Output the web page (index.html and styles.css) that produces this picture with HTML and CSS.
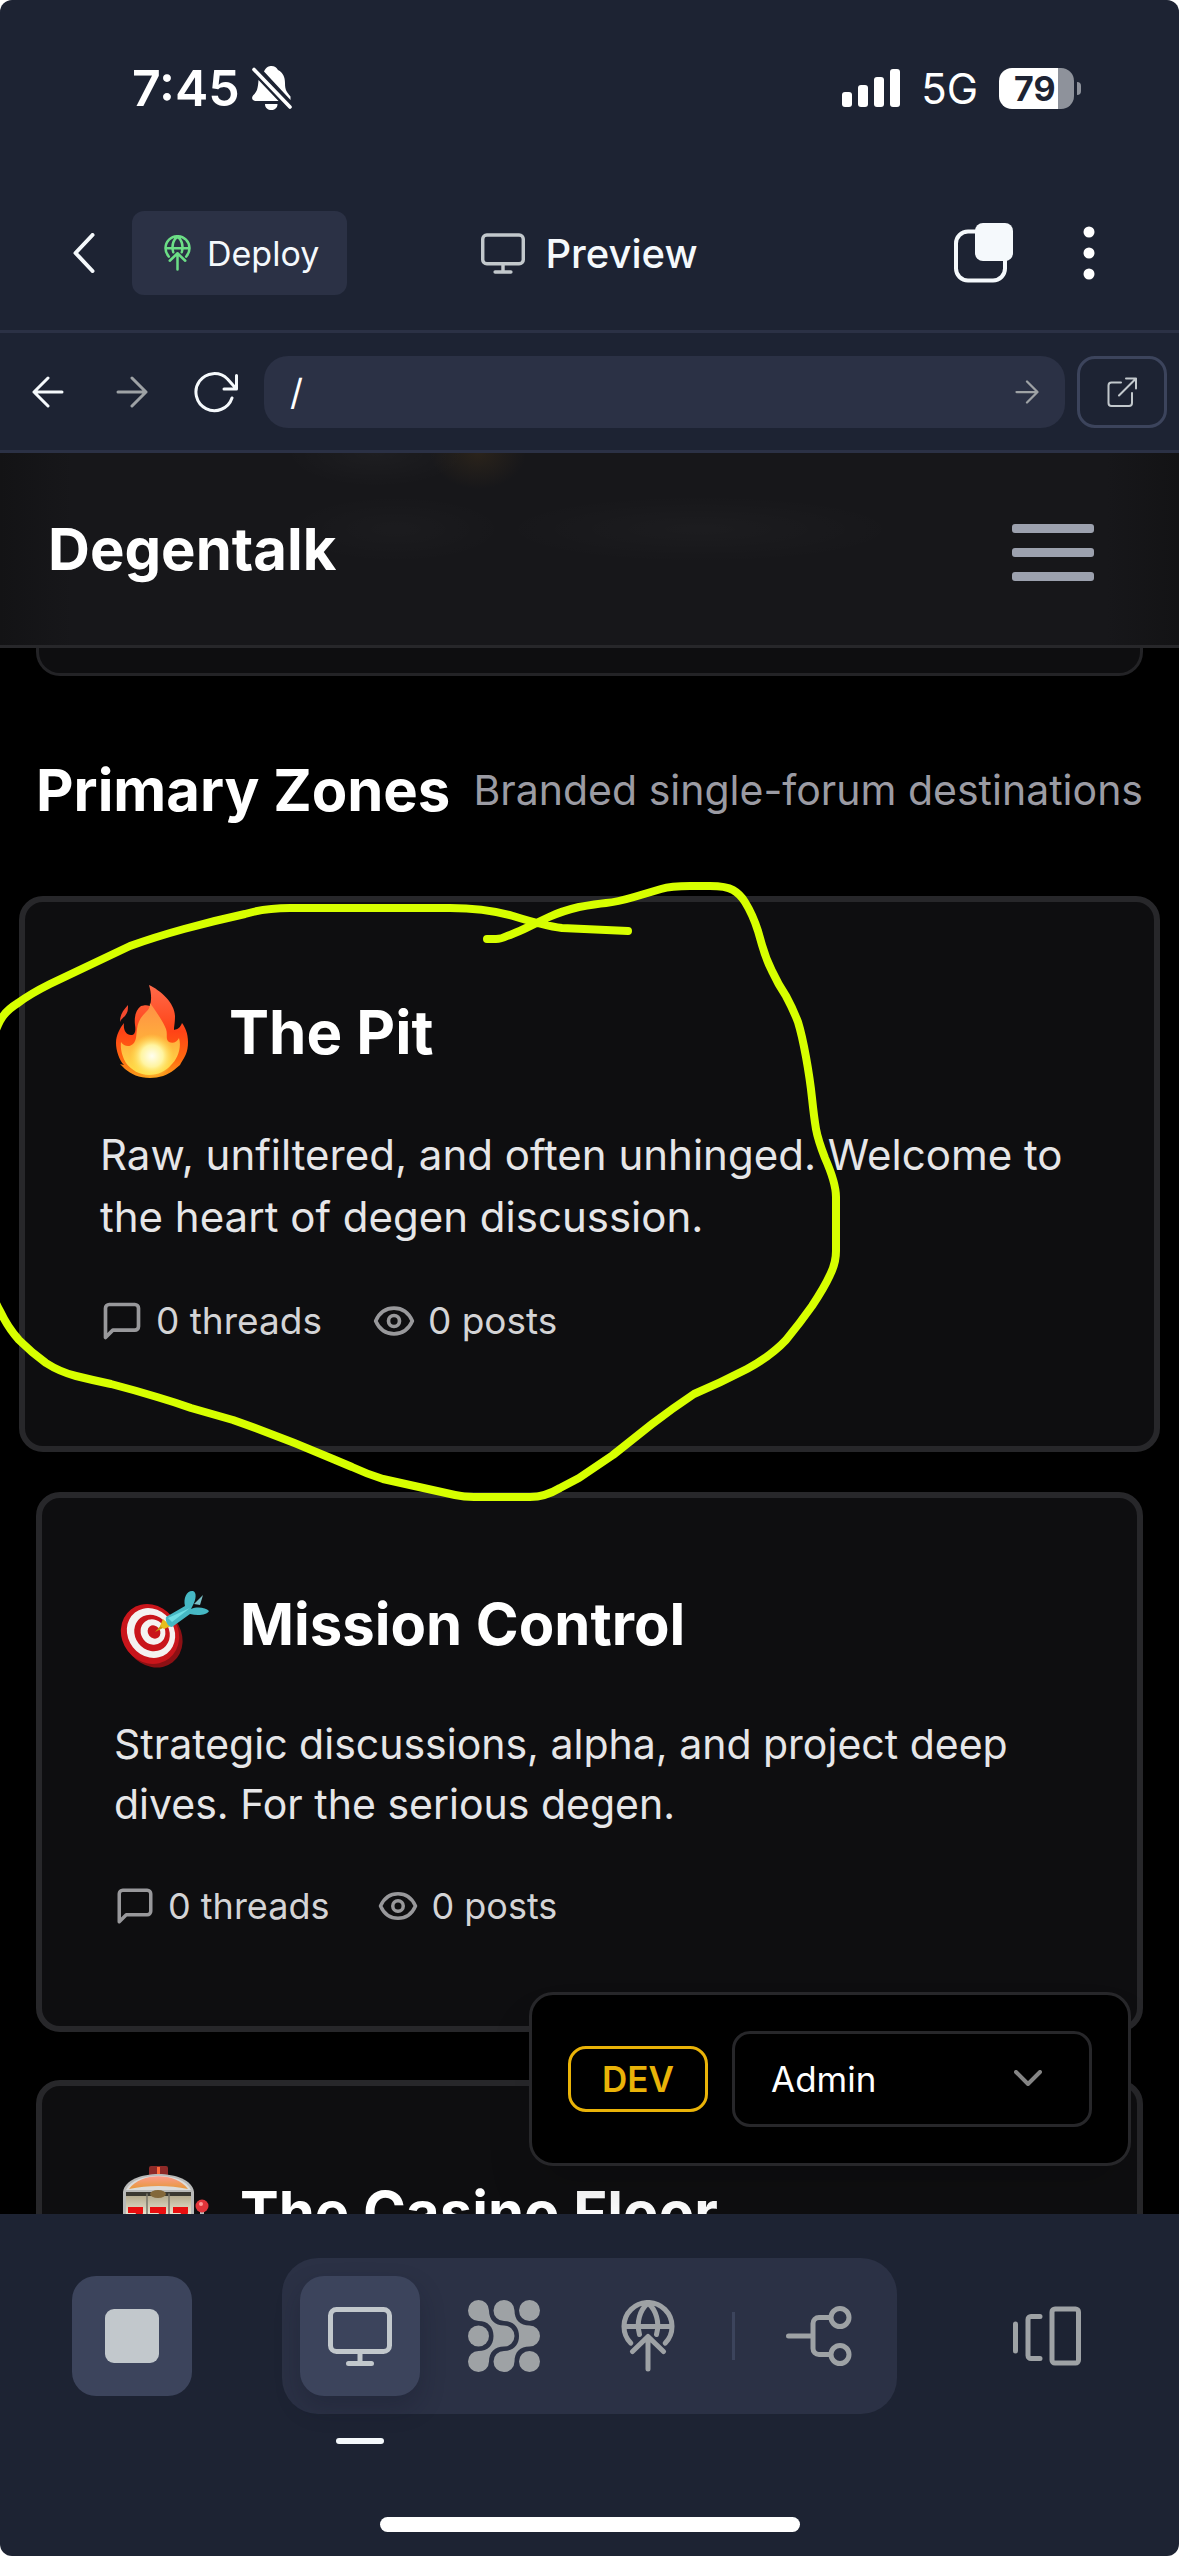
FILE: index.html
```html
<!DOCTYPE html>
<html lang="en">
<head>
<meta charset="utf-8">
<meta name="viewport" content="width=device-width, initial-scale=1">
<title>Preview</title>
<link rel="stylesheet" href="styles.css">
</head>
<body>
<svg class="defs" aria-hidden="true">
  <symbol id="i-monitor" viewBox="0 0 64 59"><rect x="2.5" y="2.5" width="59" height="42" rx="6"/><path d="M32 45v11M20.500 56.500h23"/></symbol>
  <symbol id="i-globe" viewBox="0 0 54 72"><path d="M9.700 43.100A24 24 0 1 1 44.300 43.100M3 26.500h48M18.500 34.500C15 22 19 10 27 3M35.500 34.500C39 22 35 10 27 3M27 37v32M11.500 51.500 27 36.500l15.500 15"/></symbol>
  <symbol id="i-left" viewBox="0 0 32 32"><path d="M30 16H2M16 2 2 16l14 14"/></symbol>
  <symbol id="i-right" viewBox="0 0 32 32"><path d="M2 16h28M16 2l14 14-14 14"/></symbol>
  <symbol id="i-message" viewBox="0 0 24 24"><path d="M21 15a2 2 0 0 1-2 2H7l-4 4V5a2 2 0 0 1 2-2h14a2 2 0 0 1 2 2z"/></symbol>
  <symbol id="i-eye" viewBox="0 0 24 24"><path d="M2 12C4 7.500 7.500 5 12 5s8 2.500 10 7c-2 4.500-5.500 7-10 7s-8-2.500-10-7z"/><circle cx="12" cy="12" r="3"/></symbol>
</svg>

<div class="app">
  <div class="status">
    <div class="status-group">
      <span class="time">7:45</span>
      <svg class="bell solid" viewBox="0 0 40 44" aria-label="Silent"><path d="M12 5.500C14 1 17 0 19.500 0c3 0 5 1.500 6.500 4 5 2.500 7 7 7 13 0 8 2 9 5.500 13.500V34zM6.500 14 26.500 35H4c-4.500 0-5-4-2-6.500C5 25.500 6 22 6.500 14zM13 38h12.500c0 4-3 6-6.200 6S13 42 13 38z"/><path d="M2 3.500 38 41" fill="none" stroke="#fff" stroke-width="3.600" stroke-linecap="round"/></svg>
    </div>
    <div class="status-group status-right">
      <svg class="bars solid" viewBox="0 0 58 38" aria-hidden="true"><rect y="23" width="10" height="15" rx="3"/><rect x="16" y="16" width="10" height="22" rx="3"/><rect x="32" y="8" width="10" height="30" rx="3"/><rect x="48" width="10" height="38" rx="3"/></svg>
      <span class="network">5G</span>
      <span class="battery"><span class="battery-level">79</span></span>
    </div>
  </div>

  <header class="topbar">
    <div class="topbar-side">
      <button class="icon-btn" aria-label="Back"><svg class="chev" viewBox="0 0 22 40"><path d="M20 2 3 20l17 18"/></svg></button>
      <button class="deploy"><svg class="deploy-icon"><use href="#i-globe"/></svg>Deploy</button>
    </div>
    <h1 class="topbar-title"><svg class="title-icon"><use href="#i-monitor"/></svg>Preview</h1>
    <div class="topbar-side topbar-end">
      <button class="icon-btn" aria-label="Tabs"><svg class="tabs-icon" viewBox="0 0 59 60"><rect x="2" y="8.500" width="49" height="49" rx="12" fill="none" stroke="#f5f9fc" stroke-width="4"/><rect x="21" y="0" width="38" height="38" rx="8" fill="#f5f9fc"/></svg></button>
      <button class="icon-btn" aria-label="More"><svg class="dots solid" viewBox="0 0 12 54"><circle cx="6" cy="6" r="5.500"/><circle cx="6" cy="27" r="5.500"/><circle cx="6" cy="48" r="5.500"/></svg></button>
    </div>
  </header>

  <nav class="toolbar" aria-label="Browser">
    <button class="tool" aria-label="Back"><svg class="arrow"><use href="#i-left"/></svg></button>
    <button class="tool dim" aria-label="Forward"><svg class="arrow"><use href="#i-right"/></svg></button>
    <button class="tool" aria-label="Reload"><svg class="reload" viewBox="0 0 44 42"><path d="M38 27A18.500 18.500 0 1 1 33.500 8L42 17.500M42.500 4.500v13.500H30"/></svg></button>
    <label class="url"><input type="text" value="/" aria-label="Path"><svg class="go"><use href="#i-right"/></svg></label>
    <button class="open" aria-label="Open in new tab"><svg class="open-icon" viewBox="0 0 30 30"><path d="M14 5.500H4.500a3 3 0 0 0-3 3V26a3 3 0 0 0 3 3H22a3 3 0 0 0 3-3V16M19 1.500h10v10M29 1.500 12 18.500"/></svg></button>
  </nav>

  <main class="preview">
    <div class="site-header">
      <a class="brand" href="#">Degentalk</a>
      <button class="burger" aria-label="Menu"><span></span><span></span><span></span></button>
    </div>

    <div class="content">
      <div class="tail-card"></div>

      <div class="section-head">
        <h2>Primary Zones</h2>
        <p>Branded single-forum destinations</p>
      </div>

      <div class="zones">
        <article class="zone zone-raised">
          <div class="zone-title">
            <svg class="emoji" viewBox="0 0 99 111" aria-label="Fire">
              <defs>
                <linearGradient id="f1" x1="0" y1="0" x2="0" y2="1"><stop offset="0" stop-color="#ff6a4a"/><stop offset=".5" stop-color="#ff4316"/><stop offset=".8" stop-color="#ff6a10"/><stop offset="1" stop-color="#f9a01c"/></linearGradient>
                <linearGradient id="f2" x1="0" y1="0" x2="0" y2="1"><stop offset="0" stop-color="#ff8f45"/><stop offset=".5" stop-color="#ffae3c"/><stop offset="1" stop-color="#ffe14a"/></linearGradient>
                <radialGradient id="f3"><stop offset="0" stop-color="#fffef0"/><stop offset=".5" stop-color="#fff4a0"/><stop offset="1" stop-color="#ffe14a" stop-opacity="0"/></radialGradient>
              </defs>
              <path fill="url(#f1)" d="M49 9C60 14 75 27 75 40c0 7-1 10-1 14 4-1 6-2 8-7 3 4 6 10 6 19 0 10-3 15-7 21l-1 2-6 5c-6 5-15 8-24 8-11 0-19-4-25-9l-5-5 4 1C19 84 16 74 16 67c0-8 4-15 8-20-1 7 2 12 7 12 4 0 5-4 4-10-1-9 1-15 6-19 4-1 6-1 9 0 2-8 1-14-1-21z"/>
              <path fill="#f4492e" d="M28 29c0 5 0 7-3 11-2 2-4 3-5 6 0-8 3-11 8-17z"/>
              <path fill="url(#f2)" d="M50 27c5 7 13 18 16 26 2 5-1 10 3 13 4 2 8 0 10-4 3 10-2 22-8 27-5 6-13 10-22 10s-18-5-23-12c-3-5-6-13-5-21 3 5 9 5 12 2 4-4 3-9 4-15 1-8 4-12 9-17 3-3 4-5 4-9z"/>
              <ellipse cx="52" cy="80" rx="22" ry="22" fill="url(#f3)"/>
            </svg>
            <h3>The Pit</h3>
          </div>
          <p class="zone-desc">Raw, unfiltered, and often unhinged. Welcome to the heart of degen discussion.</p>
          <ul class="stats">
            <li><svg><use href="#i-message"/></svg>0 threads</li>
            <li><svg><use href="#i-eye"/></svg>0 posts</li>
          </ul>
        </article>

        <article class="zone">
          <div class="zone-title">
            <svg class="emoji" viewBox="0 0 96 108" aria-label="Dart target">
              <ellipse cx="39" cy="67" rx="28" ry="32" transform="rotate(-38 39 67)" fill="#8c1014"/>
              <ellipse cx="36" cy="64" rx="28" ry="31" transform="rotate(-38 36 64)" fill="#c9151b"/>
              <ellipse cx="37" cy="63" rx="23" ry="26" transform="rotate(-38 37 63)" fill="#f4f2f1"/>
              <ellipse cx="38" cy="63" rx="17" ry="19" transform="rotate(-38 38 63)" fill="#c9151b"/>
              <ellipse cx="39" cy="62" rx="12" ry="13" transform="rotate(-38 39 62)" fill="#f4f2f1"/>
              <ellipse cx="40" cy="62" rx="6" ry="7" transform="rotate(-38 40 62)" fill="#c9151b"/>
              <path d="m41 62 8-9 4 3z" fill="#c79a12"/><path d="m49 49 8 7-7 3-4-3z" fill="#e8bd1c"/>
              <path d="m80 34 9-9-3 10z" fill="#7bbfc6"/>
              <path d="M52 47 71 36C69 28 73 20 79 21c4 1 3 9 0 14l-2 4c7-3 15-1 18 2-2 4-11 5-19 3L58 57c-4 0-7-6-6-10z" fill="#46b8c4"/>
              <path d="m54 48 22-10-18 14z" fill="#6fdde4"/>
            </svg>
            <h3>Mission Control</h3>
          </div>
          <p class="zone-desc">Strategic discussions, alpha, and project deep dives. For the serious degen.</p>
          <ul class="stats">
            <li><svg><use href="#i-message"/></svg>0 threads</li>
            <li><svg><use href="#i-eye"/></svg>0 posts</li>
          </ul>
        </article>

        <article class="zone">
          <div class="zone-title">
            <svg class="emoji" viewBox="0 0 96 108" aria-label="Slot machine">
              <defs><linearGradient id="s1" x1="0" y1="0" x2="0" y2="1"><stop offset="0" stop-color="#ff9a8a"/><stop offset="1" stop-color="#e59a3c"/></linearGradient><linearGradient id="s2" x1="0" y1="0" x2="0" y2="1"><stop offset="0" stop-color="#b5ac90"/><stop offset=".5" stop-color="#fbf8e6"/></linearGradient></defs>
              <rect x="35" y="8" width="19" height="12" rx="2" fill="#8e2a28"/><path d="M43 9h3v10h-3z" fill="#ff6a3a"/>
              <path d="M9 34C12 10 77 10 80 34v66H9z" fill="#b9bab9"/><path d="M12 32C20 13 69 13 77 32z" fill="#dcdcda"/>
              <path d="M15 31C27 14 62 14 74 31 55 27 34 27 15 31z" fill="url(#s1)"/>
              <path d="M12 34h65v5H12z" fill="#3a3932"/><path d="M12 38h65v50H12z" fill="url(#s2)"/>
              <path d="M33 36v52M55 36v52" stroke="#79776b" stroke-width="1.500"/>
              <ellipse cx="44" cy="36" rx="8" ry="4" fill="#83683a"/>
              <path d="M14 49h15v6l-6 14h-8l7-14h-8zM36 49h16v6l-6 14h-8l7-14h-9zM59 49h15v6l-6 14h-8l7-14h-8z" fill="#e90f10"/>
              <path d="M86 54h4v24h-4z" fill="#b9bab9"/><circle cx="88" cy="48" r="6.500" fill="#e2343a"/><circle cx="87" cy="46" r="2" fill="#ff9a98"/>
            </svg>
            <h3>The Casino Floor</h3>
          </div>
        </article>
      </div>

      <svg class="markup" viewBox="0 0 1179 900" aria-hidden="true"><path d="M487 291H496Q501 291 507 288Q513 286 524 281L549 269Q562 263 579 259Q596 256 606 255Q617 254 634 249L661 241Q671 238 690 238H710Q726 238 733 242Q740 246 745 254Q753 267 758 283L762 297Q766 311 772 323Q778 336 786 348Q793 361 798 374Q802 387 806 409Q810 431 812 450Q814 469 816 481Q818 492 825 510Q836 535 836 549V603Q836 615 830 627Q824 640 812 658Q800 675 786 692Q771 708 747 721Q720 735 694 746Q673 760 652 776L613 807L579 830L560 840Q545 849 530 849H474Q464 849 455 847L383 831Q367 826 352 819L333 811Q284 790 233 772Q212 766 191 760Q174 754 157 749Q134 742 111 736Q92 732 76 728Q60 724 46 715Q32 705 19 692Q8 680 0 663Q-24 620-24 520T0 373Q5 363 18 355Q30 346 50 336L130 298Q155 289 184 281Q213 273 245 266Q265 260 290 260H450Q485 260 513 268Q545 278 562 280L628 283"/></svg>
    </div>

    <div class="dev-panel">
      <span class="dev-badge">DEV</span>
      <span class="role"><select aria-label="Role"><option>Admin</option></select><svg viewBox="0 0 28 16"><path d="m2 2 12 12L26 2"/></svg></span>
    </div>
  </main>

  <footer class="dock">
    <div class="dock-row">
      <button class="dock-btn filled" aria-label="Stop"><span class="stop"></span></button>
      <div class="pill">
        <button class="dock-btn filled active" aria-label="Preview"><svg class="dock-monitor"><use href="#i-monitor"/></svg></button>
        <button class="dock-btn" aria-label="Agent"><svg class="dock-dots" viewBox="0 0 72 72"><path d="M10.500 0A10.500 10.500 0 0 1 21 10.500C21 20 27 25.500 36 25.500A10.500 10.500 0 0 1 36 46.500C27 46.500 21 52 21 61.500A10.500 10.500 0 1 1 10.500 51C20 51 25.500 45 25.500 36S20 21 10.500 21a10.500 10.500 0 0 1 0-21z"/><path d="M36 0A10.500 10.500 0 0 1 46.500 10.500C46.500 20 52 25.500 61.500 25.500a10.500 10.500 0 0 1 0 21C52 46.500 46.500 52 46.500 61.500A10.500 10.500 0 1 1 36 51C45.500 51 51 45 51 36S45.500 21 36 21a10.500 10.500 0 0 1 0-21z"/><circle cx="61.500" cy="10.500" r="10.500"/><circle cx="10.500" cy="36" r="10.500"/><circle cx="61.500" cy="61.500" r="10.500"/></svg></button>
        <button class="dock-btn" aria-label="Deployments"><svg class="dock-globe"><use href="#i-globe"/></svg></button>
        <span class="divider"></span>
        <button class="dock-btn" aria-label="Branches"><svg class="dock-branch" viewBox="0 0 66 60"><path d="M2.500 30H26M43 11.500H33a6 6 0 0 0-6 6v25a6 6 0 0 0 6 6h10"/><circle cx="54" cy="11.500" r="9"/><circle cx="54" cy="48.500" r="9"/></svg></button>
      </div>
      <button class="dock-btn" aria-label="Tabs"><svg class="dock-tabs" viewBox="0 0 68 60"><path d="M2.500 18v27M27 10.500H18a3 3 0 0 0-3 3v36a3 3 0 0 0 3 3h9"/><rect x="39" y="3" width="26.500" height="54" rx="3"/></svg></button>
    </div>
    <div class="home"></div>
  </footer>
</div>
</body>
</html>
```
FILE: styles.css
```css
* { box-sizing: border-box; margin: 0; padding: 0; }

body {
  background: #fff;
  font-family: Inter, "Liberation Sans", sans-serif;
  color: #fff;
}

button, input, select { font: inherit; color: inherit; background: none; border: 0; appearance: none; }
button { display: flex; align-items: center; justify-content: center; cursor: pointer; }
svg { display: block; flex: none; fill: none; stroke-linecap: round; stroke-linejoin: round; }
.defs { position: absolute; width: 0; height: 0; }
.solid { fill: #fff; }

.app {
  display: flex;
  flex-direction: column;
  height: 100vh;
  background: #1d2333;
  border-radius: 12px;
  overflow: hidden;
}

/* Phone status bar */
.status { display: flex; justify-content: space-between; align-items: center; height: 176px; padding: 0 105px 0 132px; }
.status-group { display: flex; align-items: center; gap: 12px; }
.status-right { gap: 21px; }
.time { font-size: 50px; font-weight: 600; }
.bell { width: 40px; height: 44px; }
.bars { width: 58px; height: 38px; }
.network { font-size: 42px; }
.battery { position: relative; width: 75px; height: 41px; border-radius: 13px; background: linear-gradient(90deg, #fff 59px, #8e929b 59px); color: #1d2333; display: flex; align-items: center; padding-left: 15px; }
.battery::after { content: ""; position: absolute; left: 78px; top: 14px; width: 4px; height: 13px; border-radius: 0 4px 4px 0; background: #8e929b; }
.battery-level { font-size: 34px; font-weight: 700; }

/* Title bar */
.topbar { display: grid; grid-template-columns: 1fr auto 1fr; align-items: center; height: 157px; padding: 0 72px; border-bottom: 3px solid #2b3145; color: #f5f9fc; }
.topbar-side { display: flex; align-items: center; gap: 37px; }
.topbar-end { justify-content: flex-end; gap: 70px; padding-right: 12px; }
.chev { width: 23px; height: 40px; stroke: #f5f9fc; stroke-width: 4; }
.deploy { gap: 16px; height: 84px; padding: 0 28px 0 32px; border-radius: 12px; background: #2b3145; font-size: 34px; }
.deploy-icon { width: 27px; height: 36px; stroke: #6cde86; stroke-width: 5; }
.topbar-title { display: flex; align-items: center; gap: 20px; font-size: 40px; font-weight: 500; }
.title-icon { width: 44px; height: 41px; stroke: #c2c8cc; stroke-width: 5; }
.tabs-icon { width: 59px; height: 60px; }
.dots { width: 12px; height: 54px; }

/* Address bar */
.toolbar { display: flex; align-items: center; height: 120px; padding: 0 12px 0 6px; border-bottom: 3px solid #2b3145; }
.tool { width: 84px; height: 72px; stroke: #f5f9fc; stroke-width: 3; }
.tool.dim { stroke: #9ea2a5; }
.arrow { width: 32px; height: 32px; }
.reload { width: 44px; height: 42px; }
.url { flex: 1; display: flex; align-items: center; height: 72px; margin: 0 12px 0 6px; padding: 0 26px; border-radius: 24px; background: #2b3145; }
.url input { flex: 1; min-width: 0; font-size: 36px; outline: 0; }
.go { width: 24px; height: 24px; stroke: #9ea2a5; stroke-width: 3; }
.open { width: 90px; height: 72px; border: 3px solid #3c445c; border-radius: 18px; stroke: #c2c8cc; stroke-width: 2; }
.open-icon { width: 30px; height: 30px; }

/* Previewed site */
.preview { position: relative; flex: 1; min-height: 0; overflow: hidden; background: #000; }
.site-header {
  display: flex; align-items: center; justify-content: space-between;
  height: 195px; padding: 0 85px 0 48px;
  border-bottom: 3px solid #27272a;
  background:
    radial-gradient(48px 36px at 478px 0, rgba(120, 84, 30, .2), transparent),
    radial-gradient(90px 34px at 376px 0, rgba(255, 255, 255, .03), transparent),
    radial-gradient(110px 34px at 396px 76px, rgba(255, 255, 255, .02), transparent),
    radial-gradient(200px 34px at 700px 76px, rgba(255, 255, 255, .025), transparent),
    linear-gradient(90deg, #131315, #17171a 72px, #17171a calc(100% - 72px), #131315);
}
.brand { font-size: 58px; font-weight: 700; color: #fff; text-decoration: none; }
.burger { flex-direction: column; gap: 15px; padding-top: 6px; }
.burger span { width: 82px; height: 9px; border-radius: 3px; background: #9ca1ae; }

.content { position: relative; padding: 0 36px; }
.tail-card { height: 28px; border: 3px solid #232326; border-top: 0; border-radius: 0 0 24px 24px; background: #0e0e10; }
.section-head { display: flex; align-items: center; justify-content: space-between; padding: 72px 0; }
.section-head h2 { font-size: 58px; line-height: 84px; white-space: nowrap; }
.section-head p { font-size: 41px; color: #9b9ba3; white-space: nowrap; }

.zones { display: flex; flex-direction: column; gap: 48px; }
.zone { min-height: 540px; padding: 72px; border: 6px solid #27272a; border-radius: 24px; background: #0e0e10; }
.zone-title { display: flex; align-items: center; gap: 30px; height: 108px; }
.zone h3 { font-size: 58px; font-weight: 700; }
.emoji { width: 96px; height: 108px; }
.zone-desc { margin-top: 36px; font-size: 41px; line-height: 60px; color: #e6e6e8; }
.stats { display: flex; gap: 48px; margin-top: 48px; list-style: none; font-size: 36px; line-height: 48px; color: #d4d4d6; }
.stats li { display: flex; align-items: center; gap: 12px; }
.stats svg { width: 42px; height: 42px; stroke: #98989b; stroke-width: 2; }

.zone-raised { min-height: 556px; margin: -8px -17px; padding: 74px 75px; }
.zone-raised .zone-title { height: 111px; }
.zone-raised .emoji { width: 99px; height: 111px; }
.zone-raised h3 { font-size: 60px; }
.zone-raised .zone-desc { margin-top: 37px; font-size: 42px; line-height: 62px; }
.zone-raised .stats { margin-top: 49px; gap: 50px; font-size: 37px; }
.zone-raised .stats svg { width: 44px; height: 44px; }

.markup { position: absolute; left: 0; top: 0; width: 1179px; height: 900px; stroke: #d7ff00; stroke-width: 8; pointer-events: none; }

.dev-panel { position: absolute; right: 48px; bottom: 48px; display: flex; align-items: center; gap: 24px; padding: 36px; border: 3px solid #27272a; border-radius: 24px; background: #000; box-shadow: 0 30px 45px rgba(0, 0, 0, .1); }
.dev-badge { width: 140px; height: 66px; border: 3px solid #eab308; border-radius: 18px; color: #eab308; font-size: 35px; font-weight: 600; line-height: 60px; text-align: center; }
.role { position: relative; }
.role select { display: block; width: 360px; height: 96px; padding: 0 36px; border: 3px solid #27272a; border-radius: 18px; font-size: 35px; }
.role svg { position: absolute; right: 50px; top: 39px; width: 28px; height: 16px; stroke: #848484; stroke-width: 4; pointer-events: none; }

/* Bottom dock */
.dock { display: flex; flex-direction: column; align-items: center; gap: 103px; padding: 44px 0 24px; }
.dock-row { align-self: stretch; display: flex; align-items: center; justify-content: space-between; padding: 0 72px; }
.dock-btn { position: relative; width: 120px; height: 120px; border-radius: 24px; stroke: #9ea2a5; stroke-width: 5; }
.filled { background: #3c445c; stroke: #c2c8cc; }
.stop { width: 54px; height: 54px; border-radius: 9px; background: #c2c8cc; }
.pill { display: flex; align-items: center; gap: 24px; padding: 18px; border-radius: 36px; background: #2b3145; }
.active { box-shadow: 0 12px 24px rgba(14, 21, 37, .25); }
.active::after { content: ""; position: absolute; left: 36px; top: 138px; width: 48px; height: 6px; margin-top: 24px; border-radius: 3px; background: #f5f9fc; }
.divider { width: 3px; height: 48px; background: #3c445c; }
.dock-monitor { width: 64px; height: 59px; }
.dock-dots { width: 72px; height: 72px; stroke: none; fill: #9ea2a5; }
.dock-globe { width: 54px; height: 72px; }
.dock-branch { width: 66px; height: 60px; }
.dock-tabs { width: 68px; height: 60px; }
.home { width: 420px; height: 15px; border-radius: 8px; background: #fff; }
```
